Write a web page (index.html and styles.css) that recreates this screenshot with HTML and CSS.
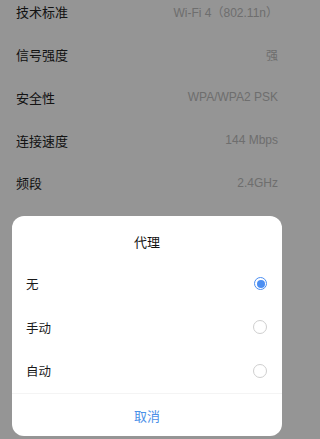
FILE: index.html
```html
<!DOCTYPE html>
<html lang="zh">
<head>
<meta charset="utf-8">
<link rel="stylesheet" href="styles.css">
</head>
<body>
<div class="page">
  <div class="list">
    <div class="row"><span class="label">技术标准</span><span class="value">Wi-Fi 4（802.11n）</span></div>
    <div class="row"><span class="label">信号强度</span><span class="value">强</span></div>
    <div class="row"><span class="label">安全性</span><span class="value">WPA/WPA2 PSK</span></div>
    <div class="row"><span class="label">连接速度</span><span class="value">144 Mbps</span></div>
    <div class="row"><span class="label">频段</span><span class="value">2.4GHz</span></div>
  </div>
</div>
<div class="mask"></div>
<div class="dialog">
  <div class="title">代理</div>
  <div class="options">
    <div class="option"><span>无</span><span class="radio checked"></span></div>
    <div class="option"><span>手动</span><span class="radio"></span></div>
    <div class="option"><span>自动</span><span class="radio"></span></div>
  </div>
  <div class="cancel">取消</div>
</div>
</body>
</html>
```
FILE: styles.css
```css
html, body {
  margin: 0;
  padding: 0;
  width: 294px;
  height: 439px;
  overflow: hidden;
  background: #fff;
  font-family: "Liberation Sans", "Noto Sans CJK SC", sans-serif;
}
.page {
  height: 439px;
  overflow: hidden;
}
.list {
  margin-top: -9.5px;
  padding: 0 16px;
}
.row {
  height: 42.75px;
  display: flex;
  align-items: center;
  justify-content: space-between;
}
.label {
  font-size: 13px;
  color: #222;
  font-family: "Noto Sans CJK SC", sans-serif;
}
.value {
  font-size: 12px;
  color: #bcbcbc;
}
.mask {
  position: absolute;
  inset: 0;
  background: rgba(0, 0, 0, 0.415);
}
.dialog {
  position: absolute;
  left: 12px;
  top: 216px;
  width: 270px;
  height: 220px;
  background: #fff;
  border-radius: 12px;
  display: flex;
  flex-direction: column;
  font-family: "Noto Sans CJK SC", sans-serif;
  overflow: hidden;
}
.title {
  padding-top: 17px;
  height: 18px;
  line-height: 18px;
  text-align: center;
  font-size: 13px;
  color: #111;
  margin-bottom: 11px;
}
.options {
  border-bottom: 1px solid #f4f4f4;
}
.option {
  height: 43.5px;
  display: flex;
  align-items: center;
  justify-content: space-between;
  padding: 0 15px 0 14px;
  font-size: 12.5px;
  color: #1a1a1a;
}
.radio {
  width: 12px;
  height: 12px;
  border: 1px solid #cfcfcf;
  border-radius: 50%;
  box-sizing: content-box;
  display: flex;
  align-items: center;
  justify-content: center;
}
.radio.checked {
  border: 1.5px solid #4b8ef2;
  width: 11px;
  height: 11px;
}
.radio.checked::after {
  content: "";
  width: 8px;
  height: 8px;
  border-radius: 50%;
  background: #4b8ef2;
}
.cancel {
  flex: 1;
  display: flex;
  align-items: center;
  justify-content: center;
  font-size: 13px;
  color: #4a8fe8;
  padding-top: 2px;
}
```
